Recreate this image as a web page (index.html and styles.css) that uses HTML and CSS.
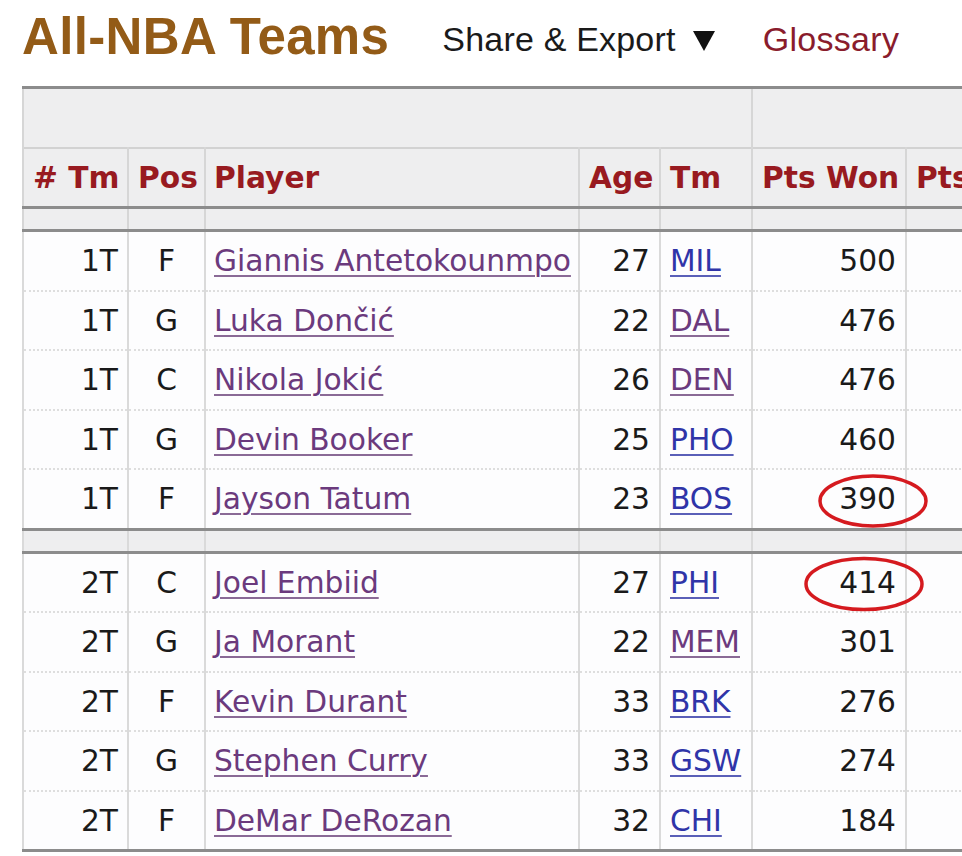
FILE: index.html
```html
<!DOCTYPE html>
<html lang="en">
<head>
<meta charset="utf-8">
<title>All-NBA Teams</title>
<link rel="stylesheet" href="styles.css">
</head>
<body>
<div class="page">
  <div class="section-head">
    <h2 class="title">All-NBA Teams</h2>
    <span class="share">Share &amp; Export<svg class="caret" width="22" height="20" viewBox="0 0 22 20"><polygon points="0,0 22,0 11,20" fill="#111"/></svg></span>
    <a class="glossary" href="#">Glossary</a>
  </div>
  <table class="stats">
    <colgroup>
      <col class="c-rank"><col class="c-pos"><col class="c-player"><col class="c-age"><col class="c-tm"><col class="c-won"><col class="c-max">
    </colgroup>
    <thead>
      <tr class="over">
        <th colspan="5"></th>
        <th colspan="2"></th>
      </tr>
      <tr class="head">
        <th class="ctr"># Tm</th>
        <th class="ctr">Pos</th>
        <th class="lft">Player</th>
        <th class="ctr">Age</th>
        <th class="lft">Tm</th>
        <th class="ctr">Pts Won</th>
        <th class="lft">Pts Max</th>
      </tr>
      <tr class="spacer"><th></th><th></th><th></th><th></th><th></th><th></th><th></th></tr>
    </thead>
    <tbody>
      <tr><td class="num">1T</td><td class="ctr">F</td><td><a class="v" href="#">Giannis Antetokounmpo</a></td><td class="num">27</td><td><a class="b" href="#">MIL</a></td><td class="num">500</td><td></td></tr>
      <tr><td class="num">1T</td><td class="ctr">G</td><td><a class="v" href="#">Luka Dončić</a></td><td class="num">22</td><td><a class="v" href="#">DAL</a></td><td class="num">476</td><td></td></tr>
      <tr><td class="num">1T</td><td class="ctr">C</td><td><a class="v" href="#">Nikola Jokić</a></td><td class="num">26</td><td><a class="v" href="#">DEN</a></td><td class="num">476</td><td></td></tr>
      <tr><td class="num">1T</td><td class="ctr">G</td><td><a class="v" href="#">Devin Booker</a></td><td class="num">25</td><td><a class="b" href="#">PHO</a></td><td class="num">460</td><td></td></tr>
      <tr><td class="num">1T</td><td class="ctr">F</td><td><a class="v" href="#">Jayson Tatum</a></td><td class="num">23</td><td><a class="b" href="#">BOS</a></td><td class="num mark">390<svg class="circle c1" width="114" height="58" viewBox="0 0 114 58"><ellipse cx="57" cy="29" rx="53" ry="25" fill="none" stroke="#d51a1f" stroke-width="3.5"/></svg></td><td></td></tr>
    </tbody>
    <tbody>
      <tr class="gap"><td></td><td></td><td></td><td></td><td></td><td></td><td></td></tr>
      <tr><td class="num">2T</td><td class="ctr">C</td><td><a class="v" href="#">Joel Embiid</a></td><td class="num">27</td><td><a class="b" href="#">PHI</a></td><td class="num mark">414<svg class="circle c2" width="124" height="58" viewBox="0 0 124 58"><ellipse cx="62" cy="29" rx="58" ry="25.5" fill="none" stroke="#d51a1f" stroke-width="3.5"/></svg></td><td></td></tr>
      <tr><td class="num">2T</td><td class="ctr">G</td><td><a class="v" href="#">Ja Morant</a></td><td class="num">22</td><td><a class="v" href="#">MEM</a></td><td class="num">301</td><td></td></tr>
      <tr><td class="num">2T</td><td class="ctr">F</td><td><a class="v" href="#">Kevin Durant</a></td><td class="num">33</td><td><a class="b" href="#">BRK</a></td><td class="num">276</td><td></td></tr>
      <tr><td class="num">2T</td><td class="ctr">G</td><td><a class="v" href="#">Stephen Curry</a></td><td class="num">33</td><td><a class="b" href="#">GSW</a></td><td class="num">274</td><td></td></tr>
      <tr><td class="num">2T</td><td class="ctr">F</td><td><a class="v" href="#">DeMar DeRozan</a></td><td class="num">32</td><td><a class="b" href="#">CHI</a></td><td class="num">184</td><td></td></tr>
    </tbody>
  </table>
</div>
</body>
</html>
```
FILE: styles.css
```css
html, body {
  margin: 0;
  padding: 0;
  background: #ffffff;
  overflow: hidden;
}
.page {
  padding-left: 22px;
  width: 1100px;
}
.section-head {
  display: flex;
  align-items: flex-start;
  height: 86px;
  box-sizing: border-box;
  padding-top: 9px;
}
.title {
  margin: 0;
  font-family: "Liberation Sans", Arial, sans-serif;
  font-weight: bold;
  font-size: 51px;
  line-height: 56px;
  letter-spacing: 0.35px;
  color: #935b17;
}
.share {
  margin-left: 53px;
  margin-top: 10px;
  font-family: "Liberation Sans", Arial, sans-serif;
  font-size: 34px;
  line-height: 40px;
  letter-spacing: 0.2px;
  color: #1a1a1a;
}
.caret {
  margin-left: 17px;
  vertical-align: baseline;
}
.glossary {
  margin-left: 48px;
  margin-top: 10px;
  font-family: "Liberation Sans", Arial, sans-serif;
  font-size: 34px;
  line-height: 40px;
  letter-spacing: 0.3px;
  color: #8a1c2c;
  text-decoration: none;
}
.stats {
  border-collapse: collapse;
  table-layout: fixed;
  width: 1003px;
  font-family: "DejaVu Sans", Verdana, sans-serif;
  font-size: 29.7px;
  color: #1a1a1a;
  border-left: 2px solid #8c8c8c;
}
.c-rank { width: 105px; }
.c-pos { width: 77px; }
.c-player { width: 374px; }
.c-age { width: 81px; }
.c-tm { width: 92px; }
.c-won { width: 154px; }
.c-max { width: 120px; }

.stats th {
  background: #eeeeef;
  font-weight: bold;
  color: #981a20;
  border-left: 2px solid #d6d6d6;
  border-right: 2px solid #d6d6d6;
  padding: 0 9px;
  white-space: nowrap;
  overflow: hidden;
}
.stats tr.over th {
  height: 58px;
  border-top: 3px solid #8c8c8c;
}
.stats tr.head th {
  height: 57px;
  border-top: 2px solid #d2d2d2;
  border-bottom: 3px solid #8c8c8c;
}
.stats tr.spacer th {
  height: 20px;
  border-bottom: 3px solid #8c8c8c;
}
.stats th.ctr { text-align: center; }
.stats th.lft { text-align: left; }
.stats tr.head th:nth-child(3) { padding-left: 8px; }

.stats td {
  background: #fdfdfe;
  height: 57.5px;
  padding: 0 9px;
  border-left: 2px solid #dadada;
  border-right: 2px solid #dadada;
  border-top: 2px dotted #dedede;
  white-space: nowrap;
  overflow: visible;
}
.stats td.num { text-align: right; }
.stats td.ctr { text-align: center; }
.stats td:nth-child(3) { padding-left: 8px; }
.stats td:nth-child(5) { padding-left: 9px; }

.stats tr.gap td {
  background: #eeeeef;
  height: 20px;
  border-top: 3px solid #8c8c8c;
  border-bottom: 3px solid #8c8c8c;
}
.stats tbody:last-child tr:last-child td {
  border-bottom: 3px solid #8c8c8c;
}

.stats a { text-decoration: underline; text-underline-offset: 4px; text-decoration-thickness: 2px; }
.stats a.v { color: #6b3a7d; text-decoration-color: #8a6a96; }
.stats a.b { color: #2f34a8; text-decoration-color: #5a5fb8; }

.mark { position: relative; }
.circle {
  position: absolute;
  pointer-events: none;
}
.c1 { left: 63px; top: 2px; }
.c2 { left: 49px; top: 1px; }
```
